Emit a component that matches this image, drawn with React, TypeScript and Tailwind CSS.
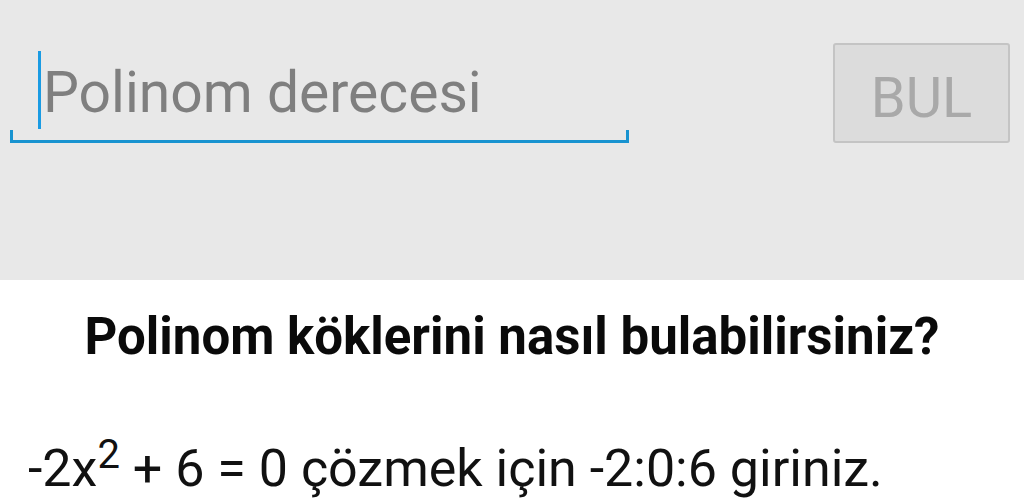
export default function App() {
  return (
    <div className="w-[1024px] h-[500px] overflow-hidden bg-white font-['Roboto',sans-serif]">
      <div className="h-[280px] bg-[#e8e8e8] flex items-start justify-between pl-[10px] pr-[14px] pt-[43px]">
        <div className="w-[619px] flex flex-col">
          <div className="h-[87px] flex items-start pl-[28px] pt-[8px]">
            <span className="w-[3px] h-[78px] bg-[#1a9be3]"></span>
            <span className="ml-[2px] mt-[7px] text-[57px] leading-[70px] text-[#7f7f7f] whitespace-nowrap">
              Polinom derecesi
            </span>
          </div>
          <div className="h-[13px] border-x-[3px] border-b-[3px] border-[#1893d0]"></div>
        </div>
        <button className="w-[177px] h-[100px] pt-[10px] bg-[#dcdcdc] border-2 border-[#c4c4c4] rounded-[3px] text-[56px] text-[#a9a9a9] leading-none">
          BUL
        </button>
      </div>

      <div className="pt-[27px] text-center text-[#0a0a0a] font-bold text-[51px] leading-[60px] whitespace-nowrap">
        Polinom köklerini nasıl bulabilirsiniz?
      </div>

      <div className="pt-[72px] pl-[28px] text-[#111] text-[52px] leading-[60px] whitespace-nowrap">
        -2x<sup className="text-[40px] top-[-18px]">2</sup> + 6 = 0 çözmek için -2:0:6 giriniz.
      </div>
    </div>
  );
}
